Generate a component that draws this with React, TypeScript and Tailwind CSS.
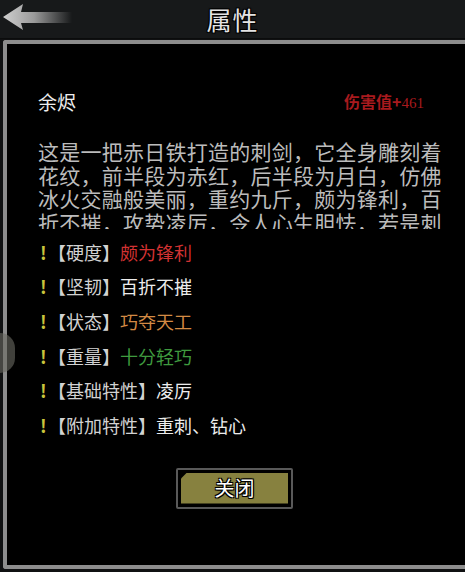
const stats = [
  { label: "【硬度】", value: "颇为锋利", color: "text-[#d23232]" },
  { label: "【坚韧】", value: "百折不摧", color: "text-[#ececec]" },
  { label: "【状态】", value: "巧夺天工", color: "text-[#d38a44]" },
  { label: "【重量】", value: "十分轻巧", color: "text-[#3f9a3f]" },
  { label: "【基础特性】", value: "凌厉", color: "text-[#ececec]" },
  { label: "【附加特性】", value: "重刺、钻心", color: "text-[#ececec]" },
]

const outline =
  "[text-shadow:0_0_2px_#000,1px_1px_0_#000,-1px_-1px_0_#000,1px_-1px_0_#000,-1px_1px_0_#000]"

export default function App() {
  return (
    <div className="relative w-[465px] h-[572px] overflow-hidden bg-[#101112] font-['Noto_Sans_CJK_SC',sans-serif]">
      {/* header */}
      <div className="relative h-[39px] bg-[#17191a] border-b border-[#0b0c0c] flex items-center justify-center">
        <svg className="absolute left-0 top-0" width="76" height="34" viewBox="0 0 76 34">
          <defs>
            <linearGradient id="arrowFade" x1="0" x2="1" y1="0" y2="0">
              <stop offset="0" stopColor="#cfcfcf" />
              <stop offset="0.45" stopColor="#9a9a9a" />
              <stop offset="1" stopColor="#9a9a9a" stopOpacity="0" />
            </linearGradient>
          </defs>
          <polygon points="3,17 23,4 21,12 72,12 72,23 21,23 23,30" fill="url(#arrowFade)" />
        </svg>
        <span className={`text-[25px] leading-none text-[#e4e4e4] tracking-[1px] ${outline}`}>属性</span>
      </div>

      {/* panel */}
      <div className="ml-[3px] mt-[1px] h-[529px] bg-black border-l-[4px] border-t-[4px] border-b-[4px] border-[#8d8d8d] rounded-tl-[3px] rounded-bl-[3px]">
        <div className="pl-[31px] pt-[45px]">
          <div className="w-[386px] flex items-end justify-between">
            <span className="text-[19px] leading-[26px] text-[#eeeeee]">余烬</span>
            <span className="text-[16px] leading-[22px] font-bold text-[#a81a1e] mb-[1px]">
              伤害值+<span className="font-['Liberation_Serif',serif] font-normal text-[15px]">461</span>
            </span>
          </div>

          <div className="mt-[25px] w-[410px] h-[89px] overflow-hidden text-[21px] leading-[23.5px] tracking-[0.25px] text-[#bcbcbc]">
            这是一把赤日铁打造的刺剑，它全身雕刻着花纹，前半段为赤红，后半段为月白，仿佛冰火交融般美丽，重约九斤，颇为锋利，百折不摧，攻势凌厉，令人心生胆怯，若是刺中要害，必将血流不止。
          </div>

          <div className="mt-[6px] flex flex-col">
            {stats.map((s, i) => (
              <div key={i} className="h-[34.6px] flex items-center text-[18px] pl-[2px]">
                <span className="font-bold text-[#c9c53c] w-[8px]">!</span>
                <span className="text-[#d2d2d2]">{s.label}</span>
                <span className={s.color}>{s.value}</span>
              </div>
            ))}
          </div>

          <div className="mt-[25px] ml-[138px] w-[117px] h-[41px] border-2 border-[#595959] rounded-[2px] p-[3px] bg-black">
            <div className="h-full bg-[#87813f] [clip-path:polygon(6px_0,100%_0,100%_100%,0_100%,0_6px)] flex items-center justify-center">
              <span className={`text-[20px] leading-none text-white ${outline}`}>关闭</span>
            </div>
          </div>
        </div>
      </div>

      {/* stray blob behind left border */}
      <div className="absolute left-0 top-[333px] w-[15px] h-[40px] rounded-r-full bg-[#6a6a62] opacity-60" />
    </div>
  )
}
